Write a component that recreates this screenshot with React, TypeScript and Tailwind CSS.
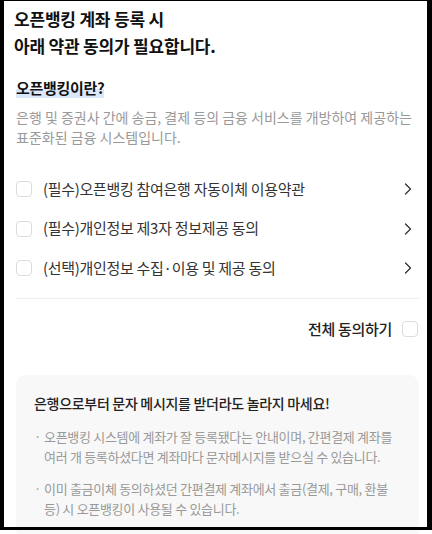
const TERMS = [
  '(필수)오픈뱅킹 참여은행 자동이체 이용약관',
  '(필수)개인정보 제3자 정보제공 동의',
  '(선택)개인정보 수집·이용 및 제공 동의',
];

const NOTES = [
  '오픈뱅킹 시스템에 계좌가 잘 등록됐다는 안내이며, 간편결제 계좌를 여러 개 등록하셨다면 계좌마다 문자메시지를 받으실 수 있습니다.',
  '이미 출금이체 동의하셨던 간편결제 계좌에서 출금(결제, 구매, 환불 등) 시 오픈뱅킹이 사용될 수 있습니다.',
];

function Box() {
  return <span className="w-4 h-4 shrink-0 rounded-[4px] border border-[#dcdcdc] bg-white" />;
}

function Chevron() {
  return (
    <svg width="8" height="12" viewBox="0 0 8 12" fill="none" className="shrink-0 mr-[5px]">
      <path d="M1.5 1 L6.5 6 L1.5 11" stroke="#333" strokeWidth="1.3" strokeLinecap="round" strokeLinejoin="round" />
    </svg>
  );
}

export default function App() {
  return (
    <div
      className="relative w-[432px] h-[534px] overflow-hidden bg-white"
      style={{ fontFamily: '"Noto Sans CJK KR", "Noto Sans", sans-serif' }}
    >
      <div className="pl-[14px] pr-[13px] pt-[5px]">
        <h1 className="text-[17px] font-bold leading-[27px] text-[#111] tracking-[-0.2px]">
          오픈뱅킹 계좌 등록 시<br />아래 약관 동의가 필요합니다.
        </h1>

        <div className="mt-[16px] px-[2px]">
          <span className="text-[15px] font-bold text-[#111] leading-[20px] bg-[linear-gradient(transparent_55%,#dbe8fb_55%)] tracking-[-0.3px]">
            오픈뱅킹이란?
          </span>
        </div>
        <p className="mt-[8px] px-[2px] text-[14px] leading-[20px] text-[#999]">
          은행 및 증권사 간에 송금, 결제 등의 금융 서비스를 개방하여 제공하는 표준화된 금융 시스템입니다.
        </p>

        <ul className="mt-[32px] px-[2px] flex flex-col gap-[19.5px]">
          {TERMS.map((t) => (
            <li key={t} className="flex items-center h-[20px]">
              <Box />
              <span className="ml-[11px] flex-1 text-[15px] text-[#333] tracking-[-0.3px]">{t}</span>
              <Chevron />
            </li>
          ))}
        </ul>

        <div className="mt-[20px] ml-[2px] border-t border-[#eeeeee]" />

        <div className="mt-[19px] px-[1px] flex items-center justify-end gap-[10px]">
          <span className="text-[15px] font-medium text-[#222] tracking-[-0.3px]">전체 동의하기</span>
          <Box />
        </div>

        <div className="mt-[34px] ml-[2px] rounded-[10px] bg-[#f8f8f8] pl-[18px] pr-[16px] pt-[18px] pb-[20px]">
          <p className="text-[14px] font-medium text-[#222] tracking-[-0.3px]">
            은행으로부터 문자 메시지를 받더라도 놀라지 마세요!
          </p>
          <ul className="mt-[13px] flex flex-col gap-[12px]">
            {NOTES.map((n) => (
              <li key={n} className="flex text-[13px] leading-[20px] text-[#999] tracking-[-0.3px]">
                <span className="w-[10px] shrink-0">·</span>
                <span>{n}</span>
              </li>
            ))}
          </ul>
        </div>
      </div>

      <div className="pointer-events-none absolute left-0 top-0 w-[432px] h-[530px] border-l-4 border-r-[5px] border-t border-b-[3px] border-black" />
    </div>
  );
}
